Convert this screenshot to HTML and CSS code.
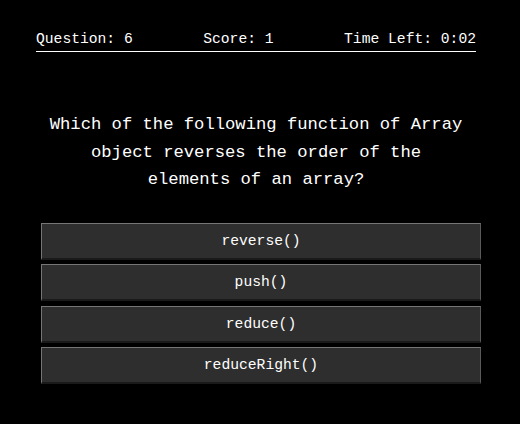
FILE: index.html
```html
<!DOCTYPE html>
<html>
<head>
<meta charset="utf-8">
<link rel="stylesheet" href="styles.css">
</head>
<body>
<div class="quiz">
  <div class="status">
    <span>Question: 6</span>
    <span>Score: 1</span>
    <span>Time Left: 0:02</span>
  </div>
  <p class="question">Which of the following function of Array object reverses the order of the elements of an array?</p>
  <div class="options">
    <button class="option">reverse()</button>
    <button class="option">push()</button>
    <button class="option">reduce()</button>
    <button class="option">reduceRight()</button>
  </div>
</div>
</body>
</html>
```
FILE: styles.css
```css
html, body {
  margin: 0;
  padding: 0;
  background: #000;
  color: #fff;
  font-family: "Liberation Mono", "DejaVu Sans Mono", monospace;
}
.quiz {
  width: 440px;
  margin-left: 36px;
}
.status {
  display: flex;
  justify-content: space-between;
  font-size: 14.67px;
  line-height: 17px;
  padding-top: 31px;
  padding-bottom: 3px;
  border-bottom: 1px solid #fff;
}
.question {
  margin: 59px 0 0 0;
  padding: 0 12px;
  text-align: center;
  font-size: 17.2px;
  line-height: 27.5px;
}
.options {
  margin-top: 29px;
  margin-left: 5px;
  display: flex;
  flex-direction: column;
  gap: 4.67px;
}
.option {
  display: block;
  width: 440px;
  height: 37px;
  margin: 0;
  padding: 0;
  background: #2e2e2e;
  color: #fff;
  font-family: "Liberation Mono", "DejaVu Sans Mono", monospace;
  font-size: 14.67px;
  border-style: solid;
  border-width: 1px 1px 2px 1px;
  border-color: #767676 #5a5a5a #1a1a1a #767676;
  text-align: center;
}
```
